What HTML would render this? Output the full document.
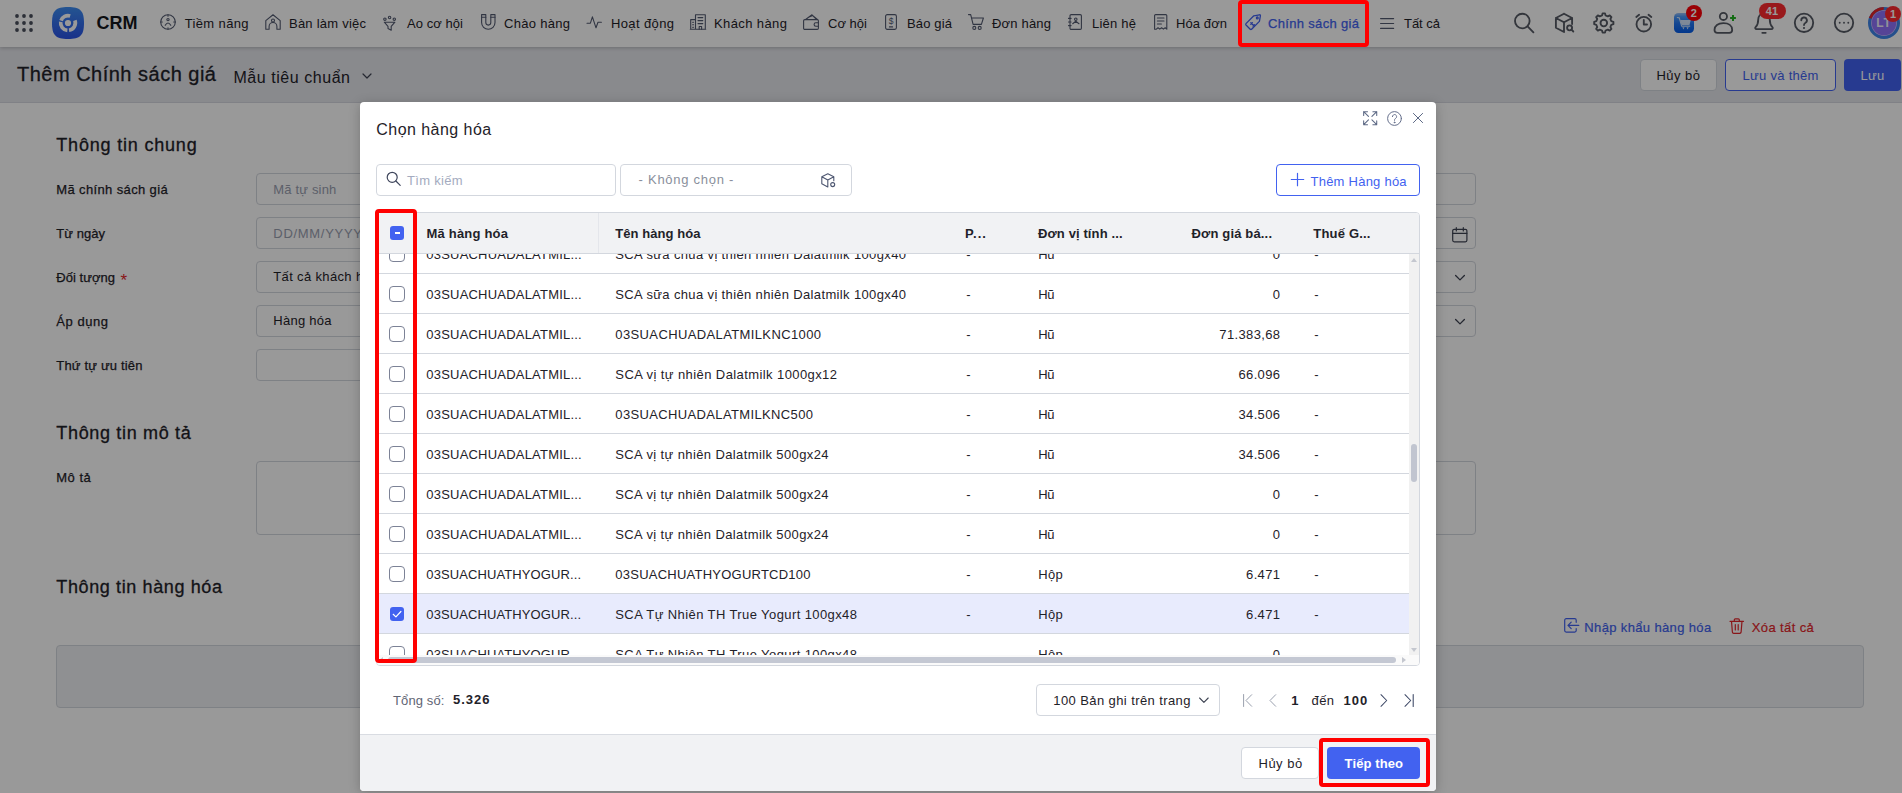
<!DOCTYPE html>
<html lang="vi"><head><meta charset="utf-8"><title>Thêm Chính sách giá - CRM</title>
<style>*{box-sizing:border-box;margin:0;padding:0}
html,body{width:1902px;height:793px;overflow:hidden;background:#fff}
body{font-family:"Liberation Sans",sans-serif;font-size:13px;color:#1f2229;position:relative}
.abs{position:absolute}
.t{position:absolute;white-space:pre;line-height:1}
svg{position:absolute;overflow:visible}
#nav{position:absolute;left:0;top:0;width:1902px;height:47px;background:#fff;box-shadow:0 1px 4px rgba(0,0,0,.22);z-index:2}
#sub{z-index:1;position:absolute;left:0;top:47px;width:1902px;height:56px;background:#e5e6ec;border-bottom:1px solid #d6d8df}
#content{position:absolute;left:0;top:102px;width:1902px;height:691px;background:#fff;z-index:0}
#overlay{position:absolute;left:0;top:0;width:1902px;height:793px;background:rgba(0,0,0,.4);z-index:5}
#modal{position:absolute;left:360px;top:102px;width:1076px;height:689px;background:#fff;border-radius:4px;z-index:6;overflow:hidden;box-shadow:0 2px 12px rgba(0,0,0,.22)}
.red{position:absolute;border:4px solid #ff0000;border-radius:4px;z-index:9}
.inp{position:absolute;border:1px solid #d3d7de;border-radius:4px;background:#fff}
.btn{position:absolute;border-radius:4px;height:32px;border:1px solid transparent}
.cb{position:absolute;left:29px;width:16px;height:16px;border:1px solid #7c8296;border-radius:4px;background:#fff}
.row{position:absolute;left:0;width:1033px;height:40px;border-top:1px solid #d3d7de}
</style></head>
<body>
<div id="nav">
<svg style="left:15px;top:14px" width="18" height="18" fill="#4a4f5c"><circle cx="2" cy="2" r="1.9"/><circle cx="2" cy="9" r="1.9"/><circle cx="2" cy="16" r="1.9"/><circle cx="9" cy="2" r="1.9"/><circle cx="9" cy="9" r="1.9"/><circle cx="9" cy="16" r="1.9"/><circle cx="16" cy="2" r="1.9"/><circle cx="16" cy="9" r="1.9"/><circle cx="16" cy="16" r="1.9"/></svg>
<svg style="left:52px;top:7px" width="32" height="32" viewBox="0 0 32 32"><defs><linearGradient id="lg" x1="0" y1="0" x2="0" y2="1"><stop offset="0" stop-color="#3d8df2"/><stop offset="1" stop-color="#2a52e6"/></linearGradient></defs><path d="M16 0C28.300 0 32 3.700 32 16S28.300 32 16 32 0 28.300 0 16 3.700 0 16 0z" fill="url(#lg)"/><g fill="none" stroke="#fff" stroke-width="3.700"><path d="M9.05 13.61A7.35 7.35 0 0 1 18.15 8.97"/><path d="M22.91 13.49A7.35 7.35 0 0 1 17.02 23.28"/><path d="M15.36 23.32A7.35 7.35 0 0 1 8.74 14.85"/></g><circle cx="16" cy="16" r="3.100" fill="#fff"/></svg>
<span class="t" style="font-size:18px;font-weight:700;color:#15171c;letter-spacing:0.0px;left:96.50px;top:13.66px;">CRM</span>
<svg style="left:160.1px;top:14.2px" width="16" height="16" viewBox="0 0 16 16" fill="none" stroke="#535a70" stroke-width="1.1" stroke-linecap="round" stroke-linejoin="round"><circle cx="8" cy="8" r="7.3"/><path d="M8 .7v1.6M8 13.7v1.6M.7 8h1.6M13.7 8h1.6"/><circle cx="8" cy="5.6" r="1.15"/><path d="M5.2 11.3Q8 6.6 10.8 11.3"/></svg>
<span class="t" style="font-size:13px;color:#1f2229;letter-spacing:0.37px;left:184.70px;top:16.60px;">Tiềm năng</span>
<svg style="left:265px;top:14px" width="16" height="16" viewBox="0 0 16 16" fill="none" stroke="#535a70" stroke-width="1.1" stroke-linecap="round" stroke-linejoin="round"><path d="M.8 15.200V6.600L8 .8l7.200 5.800v8.600h-3.300v-2.800a3.900 3.900 0 0 0-7.800 0v2.800z"/><circle cx="8" cy="6.500" r="1.500"/></svg>
<span class="t" style="font-size:13px;color:#1f2229;letter-spacing:0.234px;left:289.00px;top:16.60px;">Bàn làm việc</span>
<svg style="left:383.3px;top:15.5px" width="16" height="16" viewBox="0 0 16 16" fill="none" stroke="#535a70" stroke-width="1.1" stroke-linecap="round" stroke-linejoin="round"><circle cx="1.9" cy="3.2" r="1.200"/><circle cx="6.600" cy="1.500" r="1.200"/><circle cx="11.300" cy="3.200" r="1.200"/><path d="M1.300 6.200h10.600l-3.700 4.200v3.800l-3.200-1.600v-2.200z"/></svg>
<span class="t" style="font-size:13px;color:#1f2229;letter-spacing:0.062px;left:407.00px;top:16.60px;">Ao cơ hội</span>
<svg style="left:480.8px;top:14px" width="16" height="16" viewBox="0 0 16 16" fill="none" stroke="#535a70" stroke-width="1.1" stroke-linecap="round" stroke-linejoin="round"><path d="M.6 .6h4.2v8a2.5 2.5 0 0 0 5 0v-8H14v8a6.7 6.7 0 0 1-13.4 0z"/><path d="M.6 3.2h4.2M9.8 3.2H14"/></svg>
<span class="t" style="font-size:13px;color:#1f2229;letter-spacing:0.297px;left:504.00px;top:16.60px;">Chào hàng</span>
<svg style="left:587.3px;top:16px" width="16" height="16" viewBox="0 0 16 16" fill="none" stroke="#535a70" stroke-width="1.1" stroke-linecap="round" stroke-linejoin="round"><path d="M0 7.2h3.4l2-6.4 3.6 11 2-5.6h3.4"/></svg>
<span class="t" style="font-size:13px;color:#1f2229;letter-spacing:0.375px;left:611.00px;top:16.60px;">Hoạt động</span>
<svg style="left:689.7px;top:14px" width="16" height="16" viewBox="0 0 16 16" fill="none" stroke="#535a70" stroke-width="1.1" stroke-linecap="round" stroke-linejoin="round"><path d="M5.5 15.3V.7h9.8v14.6M.7 15.3V5.6h4.8M.3 15.3h15.4"/><path d="M8 3.6h4.8M8 6.6h4.8M8 9.6h4.8M2.6 8.3h1M2.6 10.8h1M2.6 13.2h1"/><path d="M9.2 15.3v-2.8h2.4v2.8"/></svg>
<span class="t" style="font-size:13px;color:#1f2229;letter-spacing:0.399px;left:714.00px;top:16.60px;">Khách hàng</span>
<svg style="left:802.5px;top:14px" width="16" height="16" viewBox="0 0 16 16" fill="none" stroke="#535a70" stroke-width="1.1" stroke-linecap="round" stroke-linejoin="round"><rect x=".6" y="5.6" width="14.8" height="9.8" rx="1.2"/><path d="M2.6 5.5L9 .8l4.4 4.6M6.2 2.9l3.6-1.3 4.6 3.9"/><path d="M15.4 8.8h-2.6a1.7 1.7 0 0 0 0 3.4h2.6"/></svg>
<span class="t" style="font-size:13px;color:#1f2229;letter-spacing:0.025px;left:828.00px;top:16.60px;">Cơ hội</span>
<svg style="left:884.6px;top:14px" width="12" height="16" viewBox="0 0 12 16" fill="none" stroke="#535a70" stroke-width="1.1" stroke-linecap="round" stroke-linejoin="round"><rect x=".6" y=".6" width="10.8" height="14.8" rx="1.6"/><path d="M4.4 12.9h3.2"/><text x="6" y="10.3" font-size="8.5" font-family="Liberation Sans, sans-serif" text-anchor="middle" fill="#535a70" stroke="none">$</text></svg>
<span class="t" style="font-size:13px;color:#1f2229;letter-spacing:0.151px;left:907.00px;top:16.60px;">Báo giá</span>
<svg style="left:967.6px;top:14px" width="16" height="16" viewBox="0 0 16 16" fill="none" stroke="#535a70" stroke-width="1.1" stroke-linecap="round" stroke-linejoin="round"><path d="M.5 .6h2.2l2.4 9.8h8.3l2-6.4H3.6"/><circle cx="6.3" cy="13.900" r="1.500"/><circle cx="11.700" cy="13.900" r="1.500"/></svg>
<span class="t" style="font-size:13px;color:#1f2229;letter-spacing:0.188px;left:992.00px;top:16.60px;">Đơn hàng</span>
<svg style="left:1068px;top:14px" width="16" height="16" viewBox="0 0 16 16" fill="none" stroke="#535a70" stroke-width="1.1" stroke-linecap="round" stroke-linejoin="round"><rect x="2" y=".6" width="11.4" height="14.8" rx="1.2"/><path d="M.5 4.4h2.6M.5 8h2.6M.5 11.6h2.6"/><circle cx="7.8" cy="5.3" r="1.25"/><path d="M4.7 9.7l3.1-2.4 3.2 2.4"/></svg>
<span class="t" style="font-size:13px;color:#1f2229;letter-spacing:0.224px;left:1092.00px;top:16.60px;">Liên hệ</span>
<svg style="left:1153.5px;top:14px" width="14" height="16" viewBox="0 0 14 16" fill="none" stroke="#535a70" stroke-width="1.1" stroke-linecap="round" stroke-linejoin="round"><path d="M.6 15.200V1.600a1 1 0 0 1 1-1h10.200a1 1 0 0 1 1 1v13.600l-1.600-1.500-1.800 1.500-1.800-1.500-1.800 1.500-1.800-1.500-1.600 1.500z"/><path d="M3.400 4h6.600M3.400 7h6.600M3.400 10h4"/></svg>
<span class="t" style="font-size:13px;color:#1f2229;letter-spacing:0.091px;left:1176.00px;top:16.60px;">Hóa đơn</span>
<svg style="left:1244.5px;top:13.8px" width="16" height="16" viewBox="0 0 16 16" fill="none" stroke="#4262f0" stroke-width="1.3" stroke-linecap="round" stroke-linejoin="round"><path d="M1 9.6L8.8 1.8l5.6-1q1.2-.2 1 1l-1 5.6-7.8 7.8q-.7.6-1.4 0L1 11q-.6-.7 0-1.400z"/><circle cx="12.3" cy="3.9" r=".9"/><path d="M5.8 8.6l1.6 1.6M7.4 8.6l-1.6 1.6M8 10.600l1.400 1.400M9.400 10.600l-1.400 1.400"/></svg>
<span class="t" style="font-size:13px;color:#4262f0;letter-spacing:0.328px;left:1268.00px;top:16.60px;-webkit-text-stroke:.25px #4262f0;">Chính sách giá</span>
<svg style="left:1379.7px;top:17.8px" width="14" height="11" viewBox="0 0 14 11" fill="none" stroke="#535a70" stroke-width="1.2" stroke-linecap="round" stroke-linejoin="round"><path d="M.6 .6h13M.6 5.5h13M.6 10.400h13"/></svg>
<span class="t" style="font-size:13px;color:#1f2229;letter-spacing:-0.025px;left:1404.00px;top:16.60px;">Tất cả</span>
<svg style="left:1512px;top:11px" width="24" height="24" viewBox="0 0 24 24" fill="none" stroke="#565a64" stroke-width="1.85" stroke-linecap="round" stroke-linejoin="round"><circle cx="10.300" cy="10" r="7.300"/><path d="M15.600 15.400l5.800 5.900"/></svg>
<svg style="left:1553px;top:11px" width="24" height="24" viewBox="0 0 24 24" fill="none" stroke="#565a64" stroke-width="1.85" stroke-linecap="round" stroke-linejoin="round"><path d="M11 2.800l8.100 4.200v6M11 2.800L2.900 7v9.800L11 21v-9.700L2.900 7M11 11.300L19.100 7"/><circle cx="16.600" cy="16.800" r="2.500"/><path d="M18.500 18.700l1.800 1.800"/></svg>
<svg style="left:1592px;top:11px" width="24" height="24" viewBox="0 0 24 24" fill="none" stroke="#565a64" stroke-width="1.85" stroke-linecap="round" stroke-linejoin="round"><path d="M10.00 4.51 L10.58 2.38 L13.02 2.38 L13.60 4.51 L15.82 5.43 L17.75 4.34 L19.46 6.05 L18.37 7.98 L19.29 10.20 L21.42 10.78 L21.42 13.22 L19.29 13.80 L18.37 16.02 L19.46 17.95 L17.75 19.66 L15.82 18.57 L13.60 19.49 L13.02 21.62 L10.58 21.62 L10.00 19.49 L7.78 18.57 L5.85 19.66 L4.14 17.95 L5.23 16.02 L4.31 13.80 L2.18 13.22 L2.18 10.78 L4.31 10.20 L5.23 7.98 L4.14 6.05 L5.85 4.34 L7.78 5.43Z" stroke-linejoin="round"/><circle cx="11.800" cy="12" r="3.300"/></svg>
<svg style="left:1632px;top:11px" width="24" height="24" viewBox="0 0 24 24" fill="none" stroke="#565a64" stroke-width="1.85" stroke-linecap="round" stroke-linejoin="round"><circle cx="11.800" cy="13.200" r="7.300"/><path d="M11.800 9v4.500h3.200M4.300 6l2.800-2.200M16.500 3.800L19.300 6"/></svg>
<div class="abs" style="left:1674px;top:13px;width:20px;height:20px;border-radius:4.500px;background:linear-gradient(180deg,#9cc0f2 0,#4b98fa 18%,#1f74f2 55%,#055ce8 100%)"></div>
<svg style="left:1674px;top:13.4px;opacity:.8" width="20" height="20" viewBox="0 0 20 20" fill="none" stroke="#fff" stroke-width="1.1" stroke-linecap="round" stroke-linejoin="round"><path d="M3.300 4.500l2 .4 2.300 8.200h8.200" stroke="#fff" stroke-width="1.100" fill="none"/><path d="M6.100 7.100h10.700l-1.300 5H7.500z" fill="#fff" stroke="none"/><path d="M8.300 14.300h2.200l-1.100 2.100zM12.500 14.300h2.200l-1.100 2.100z" fill="#fff" stroke="none"/></svg>
<div class="abs" style="left:1686px;top:5px;width:16px;height:16px;border-radius:8px;background:#ff0008"></div>
<span class="t" style="font-size:11px;font-weight:700;color:#fff;letter-spacing:0px;left:1690.80px;top:7.79px;">2</span>
<svg style="left:1711px;top:11px" width="24" height="24" viewBox="0 0 24 24" fill="none" stroke="#565a64" stroke-width="1.8" stroke-linecap="round" stroke-linejoin="round"><circle cx="12.400" cy="5.400" r="3.600"/><path d="M3.500 19c0-4.500 3.500-6.800 8.900-6.800s8.800 2.300 8.800 6.800c0 1.900-1.400 2.800-3 2.800H6.500c-1.600 0-3-.9-3-2.800z"/></svg>
<svg style="left:1729px;top:14px;stroke-linecap:butt" width="8" height="8" viewBox="0 0 8 8" fill="none" stroke="#22b522" stroke-width="2" stroke-linecap="round" stroke-linejoin="round"><path d="M4 1.100v5.800M1.100 4h5.800"/></svg>
<svg style="left:1752px;top:11px" width="24" height="24" viewBox="0 0 24 24" fill="none" stroke="#565a64" stroke-width="1.85" stroke-linecap="round" stroke-linejoin="round"><path d="M12 2.500c-3.600 0-5.800 2.800-5.800 6.300 0 4.200-1.400 6.200-2.600 7.300-.8.800-.3 2 .9 2h15c1.200 0 1.700-1.200.9-2-1.200-1.100-2.600-3.100-2.600-7.300 0-3.500-2.200-6.300-5.800-6.300z"/><path d="M10.300 21.800h3.400"/></svg>
<div class="abs" style="left:1759px;top:3px;width:27px;height:16px;border-radius:8px;background:#ff2b30"></div>
<span class="t" style="font-size:11px;font-weight:700;color:#fff;letter-spacing:0px;left:1765.80px;top:5.69px;">41</span>
<svg style="left:1792px;top:11px" width="24" height="24" viewBox="0 0 24 24" fill="none" stroke="#565a64" stroke-width="1.85" stroke-linecap="round" stroke-linejoin="round"><circle cx="12" cy="11.800" r="9.200"/><path d="M9.300 9.300a2.800 2.800 0 1 1 4.200 2.400c-1 .6-1.500 1.200-1.500 2.400"/><circle cx="12" cy="17" r="1.050" fill="#565a64" stroke="none"/></svg>
<svg style="left:1832px;top:11px" width="24" height="24" viewBox="0 0 24 24" fill="none" stroke="#565a64" stroke-width="1.85" stroke-linecap="round" stroke-linejoin="round"><circle cx="12" cy="11.800" r="9.200"/><g stroke="none" fill="#565a64"><circle cx="7.700" cy="11.800" r=".95"/><circle cx="12" cy="11.800" r=".95"/><circle cx="16.300" cy="11.800" r=".95"/></g></svg>
<div class="abs" style="left:1868px;top:7px;width:32px;height:32px;border-radius:16px;background:#8f72fa;border:3px solid #3f86ea;box-shadow:inset 0 0 0 .8px rgba(255,255,255,.55)"></div>
<svg style="left:1868px;top:7px;stroke-linecap:butt" width="32" height="32" viewBox="0 0 32 32" fill="none" stroke="#e5252b" stroke-width="2.8" stroke-linecap="round" stroke-linejoin="round"><path d="M2.20 11.25A14.6 14.6 0 0 1 15.75 1.40"/></svg>
<span class="t" style="font-size:12px;font-weight:700;color:rgba(255,255,255,.92);letter-spacing:0.8px;left:1876.30px;top:17.24px;">LT</span>
<div class="abs" style="left:1885.200px;top:6.300px;width:15.500px;height:15.500px;border-radius:8px;background:#ff2b30"></div>
<span class="t" style="font-size:11px;font-weight:700;color:#fff;letter-spacing:0px;left:1890.00px;top:8.69px;">1</span>
</div>
<div id="sub">
<span class="t" style="font-size:20px;color:#1f2229;letter-spacing:0.494px;left:17.00px;top:17.07px;-webkit-text-stroke:.3px #1f2229;">Thêm Chính sách giá</span>
<span class="t" style="font-size:16px;color:#1f2229;letter-spacing:0.546px;left:233.50px;top:23.06px;">Mẫu tiêu chuẩn</span>
<svg style="left:362px;top:25px" width="10" height="8" viewBox="0 0 10 8" fill="none" stroke="#3f4453" stroke-width="1.2" stroke-linecap="round" stroke-linejoin="round"><path d="M1 2l4 4 4-4"/></svg>
<div class="btn" style="left:1639.500px;top:12px;width:77px;background:#fff;border-color:#d3d7de"></div>
<span class="t" style="font-size:13px;color:#1f2229;letter-spacing:0.459px;left:1656.50px;top:21.80px;">Hủy bỏ</span>
<div class="btn" style="left:1725px;top:12px;width:111px;background:#fff;border-color:#4262f0"></div>
<span class="t" style="font-size:13px;color:#4262f0;letter-spacing:0.287px;left:1742.50px;top:21.80px;">Lưu và thêm</span>
<div class="btn" style="left:1844px;top:12px;width:57px;background:#4262f0"></div>
<span class="t" style="font-size:13px;color:#fff;letter-spacing:0.264px;left:1860.50px;top:21.80px;">Lưu</span>
</div>
<div id="content">
<span class="t" style="font-size:18px;color:#1f2229;letter-spacing:0.808px;left:56.30px;top:34.06px;-webkit-text-stroke:.3px #1f2229;">Thông tin chung</span>
<span class="t" style="font-size:13px;color:#1f2229;letter-spacing:0.368px;left:56.30px;top:80.80px;-webkit-text-stroke:.25px #1f2229;">Mã chính sách giá</span>
<div class="inp" style="left:256px;top:71px;width:1220px;height:32px"></div>
<span class="t" style="font-size:13px;color:#1f2229;letter-spacing:0.041px;left:56.30px;top:124.80px;-webkit-text-stroke:.25px #1f2229;">Từ ngày</span>
<div class="inp" style="left:256px;top:115px;width:1220px;height:32px"></div>
<span class="t" style="font-size:13px;color:#1f2229;letter-spacing:0.035px;left:56.30px;top:168.80px;-webkit-text-stroke:.25px #1f2229;">Đối tượng</span>
<div class="inp" style="left:256px;top:159px;width:1220px;height:32px"></div>
<span class="t" style="font-size:13px;color:#1f2229;letter-spacing:0.544px;left:56.30px;top:212.80px;-webkit-text-stroke:.25px #1f2229;">Áp dụng</span>
<div class="inp" style="left:256px;top:203px;width:1220px;height:32px"></div>
<span class="t" style="font-size:13px;color:#1f2229;letter-spacing:0.175px;left:56.30px;top:256.80px;-webkit-text-stroke:.25px #1f2229;">Thứ tự ưu tiên</span>
<div class="inp" style="left:256px;top:247px;width:600px;height:32px"></div>
<span class="t" style="font-size:17px;color:#e5252b;letter-spacing:0px;left:120.50px;top:170.11px;">*</span>
<span class="t" style="font-size:13px;color:#9aa0b0;letter-spacing:0.172px;left:273.30px;top:80.80px;">Mã tự sinh</span>
<span class="t" style="font-size:13px;color:#9aa0b0;letter-spacing:0.706px;left:273.30px;top:124.80px;">DD/MM/YYYY</span>
<span class="t" style="font-size:13px;color:#1f2229;letter-spacing:0.35px;left:273.30px;top:168.30px;">Tất cả khách hàng</span>
<span class="t" style="font-size:13px;color:#1f2229;letter-spacing:0.258px;left:273.30px;top:212.30px;">Hàng hóa</span>
<svg style="left:1452px;top:125px" width="16" height="16" viewBox="0 0 16 16" fill="none" stroke="#3f4453" stroke-width="1.2" stroke-linecap="round" stroke-linejoin="round"><rect x=".7" y="2.300" width="14.200" height="12.500" rx="1.500"/><path d="M.7 6.300h14.200M4.300 .7v3.200M11.300 .7v3.200"/></svg>
<svg style="left:1454.5px;top:171.5px" width="10" height="8" viewBox="0 0 10 8" fill="none" stroke="#3f4453" stroke-width="1.3" stroke-linecap="round" stroke-linejoin="round"><path d="M.6 1.500l4.400 4.400 4.400-4.400"/></svg>
<svg style="left:1454.5px;top:215.5px" width="10" height="8" viewBox="0 0 10 8" fill="none" stroke="#3f4453" stroke-width="1.3" stroke-linecap="round" stroke-linejoin="round"><path d="M.6 1.500l4.400 4.400 4.400-4.400"/></svg>
<span class="t" style="font-size:18px;color:#1f2229;letter-spacing:0.673px;left:56.30px;top:322.06px;-webkit-text-stroke:.3px #1f2229;">Thông tin mô tả</span>
<span class="t" style="font-size:13px;color:#1f2229;letter-spacing:0.471px;left:56.30px;top:368.80px;-webkit-text-stroke:.25px #1f2229;">Mô tả</span>
<div class="inp" style="left:256px;top:359px;width:1220px;height:74px"></div>
<span class="t" style="font-size:18px;color:#1f2229;letter-spacing:0.621px;left:56.30px;top:476.06px;-webkit-text-stroke:.3px #1f2229;">Thông tin hàng hóa</span>
<div class="inp" style="left:56px;top:543px;width:1808px;height:63px;background:#eff0f3"></div>
<svg style="left:1564px;top:516.2px" width="16" height="16" viewBox="0 0 16 16" fill="none" stroke="#4262f0" stroke-width="1.2" stroke-linecap="round" stroke-linejoin="round"><path d="M12.200 4.300V2.200a1.500 1.500 0 0 0-1.500-1.500H2.200A1.500 1.500 0 0 0 .7 2.200v10.400a1.500 1.500 0 0 0 1.500 1.500h8.500a1.500 1.500 0 0 0 1.500-1.500v-2"/><path d="M14.800 7.400H4M7.200 4.200L4 7.400l3.200 3.200"/></svg>
<span class="t" style="font-size:13px;color:#4262f0;letter-spacing:0.364px;left:1584.30px;top:519.00px;-webkit-text-stroke:.2px #4262f0;">Nhập khẩu hàng hóa</span>
<svg style="left:1728.5px;top:516px" width="16" height="16" viewBox="0 0 16 16" fill="none" stroke="#e5252b" stroke-width="1.2" stroke-linecap="round" stroke-linejoin="round"><path d="M1 3.300h13.500M5.300 3.300V1.800a1 1 0 0 1 1-1h3a1 1 0 0 1 1 1v1.500M2.500 3.300l.9 10.900a1.300 1.300 0 0 0 1.300 1.100h6.100a1.300 1.300 0 0 0 1.300-1.100L13 3.300M6.300 6.500v5.500M9.200 6.500v5.500"/></svg>
<span class="t" style="font-size:13px;color:#e5252b;letter-spacing:0.384px;left:1751.80px;top:519.00px;-webkit-text-stroke:.2px #e5252b;">Xóa tất cả</span>
</div>
<div id="overlay"></div>
<div id="modal">
<span class="t" style="font-size:16px;color:#1f2229;letter-spacing:0.455px;left:16.30px;top:19.76px;">Chọn hàng hóa</span>
<svg style="left:1002.7px;top:8.799999999999997px" width="14.4" height="14.4" viewBox="0 0 15 15" fill="none" stroke="#5d6985" stroke-width="1.1" stroke-linecap="round" stroke-linejoin="round"><path d="M.7 4.700V.7h4M.7 .7l5 5M10.300 .7h4v4M14.300 .7l-5 5M.7 10.300v4h4M.7 14.300l5-5M14.300 10.300v4h-4M14.300 14.300l-5-5"/></svg>
<svg style="left:1027px;top:8.5px" width="15" height="15" viewBox="0 0 15 15" fill="none" stroke="#66708c" stroke-width="1" stroke-linecap="round" stroke-linejoin="round"><circle cx="7.500" cy="7.500" r="6.900"/><path d="M5.400 5.600a2.100 2.100 0 1 1 3.200 1.800c-.8.500-1.100.9-1.100 1.900"/><circle cx="7.500" cy="11.400" r=".45" fill="#5d6985"/></svg>
<svg style="left:1053px;top:11px" width="10" height="10" viewBox="0 0 10 10" fill="none" stroke="#5d6985" stroke-width="1" stroke-linecap="round" stroke-linejoin="round"><path d="M.4 .4l9.200 9.200M9.600 .4L.4 9.600"/></svg>
<div class="inp" style="left:16px;top:62px;width:240px;height:32px"></div>
<svg style="left:26.30000000000001px;top:69.19999999999999px" width="16" height="16" viewBox="0 0 16 16" fill="none" stroke="#3f465c" stroke-width="1.2" stroke-linecap="round" stroke-linejoin="round"><circle cx="6.200" cy="6.300" r="5"/><path d="M9.900 10l4.300 4.300"/></svg>
<span class="t" style="font-size:13px;color:#a4abc0;letter-spacing:0.292px;left:47.00px;top:71.60px;">Tìm kiếm</span>
<div class="inp" style="left:260px;top:62px;width:232px;height:32px"></div>
<span class="t" style="font-size:13px;color:#8a8f9c;letter-spacing:0.732px;left:278.60px;top:71.20px;">- Không chọn -</span>
<svg style="left:461px;top:70.5px" width="16" height="16" viewBox="0 0 16 16" fill="none" stroke="#4d5670" stroke-width="1.1" stroke-linecap="round" stroke-linejoin="round"><path d="M6.800 .8l6 3v4M6.800 .8L.8 3.800v7l6 3.200V7L.8 3.800M6.800 7l6-3.200"/><circle cx="11.700" cy="11.600" r="2"/></svg>
<div class="btn" style="left:916px;top:62px;width:144px;border-color:#4262f0;background:#fff"></div>
<svg style="left:931px;top:71px" width="13" height="13" viewBox="0 0 13 13" fill="none" stroke="#4262f0" stroke-width="1.2" stroke-linecap="round" stroke-linejoin="round"><path d="M6.500 .3v12.400M.3 6.500h12.400"/></svg>
<span class="t" style="font-size:13px;color:#4262f0;letter-spacing:0.239px;left:950.50px;top:72.60px;">Thêm Hàng hóa</span>
<div class="abs" style="left:16px;top:110px;width:1044px;height:454px;border:1px solid #d3d7de;border-radius:4px;overflow:hidden;background:#fff">
<div class="abs" style="left:0;top:41px;width:1032px;height:401px;overflow:hidden">
<div class="row" style="top:-21px;">
<div class="cb" style="left:12px;top:12px"></div>
<span class="t" style="font-size:13px;color:#1f2229;letter-spacing:0.207px;left:49.30px;top:14.20px;">03SUACHUADALATMIL...</span>
<span class="t" style="font-size:13px;color:#1f2229;letter-spacing:0.365px;left:238.30px;top:14.20px;">SCA sữa chua vị thiên nhiên Dalatmilk 100gx40</span>
<span class="t" style="font-size:13px;color:#1f2229;letter-spacing:0px;left:589.30px;top:14.20px;">-</span>
<span class="t" style="font-size:13px;color:#1f2229;letter-spacing:-0.325px;left:661.30px;top:14.20px;">Hũ</span>
<span class="t" style="font-size:13px;color:#1f2229;letter-spacing:0.35px;left:895.77px;top:14.20px;">0</span>
<span class="t" style="font-size:13px;color:#1f2229;letter-spacing:0px;left:937.30px;top:14.20px;">-</span>
</div>
<div class="row" style="top:19px;">
<div class="cb" style="left:12px;top:12px"></div>
<span class="t" style="font-size:13px;color:#1f2229;letter-spacing:0.207px;left:49.30px;top:14.20px;">03SUACHUADALATMIL...</span>
<span class="t" style="font-size:13px;color:#1f2229;letter-spacing:0.365px;left:238.30px;top:14.20px;">SCA sữa chua vị thiên nhiên Dalatmilk 100gx40</span>
<span class="t" style="font-size:13px;color:#1f2229;letter-spacing:0px;left:589.30px;top:14.20px;">-</span>
<span class="t" style="font-size:13px;color:#1f2229;letter-spacing:-0.325px;left:661.30px;top:14.20px;">Hũ</span>
<span class="t" style="font-size:13px;color:#1f2229;letter-spacing:0.35px;left:895.77px;top:14.20px;">0</span>
<span class="t" style="font-size:13px;color:#1f2229;letter-spacing:0px;left:937.30px;top:14.20px;">-</span>
</div>
<div class="row" style="top:59px;">
<div class="cb" style="left:12px;top:12px"></div>
<span class="t" style="font-size:13px;color:#1f2229;letter-spacing:0.207px;left:49.30px;top:14.20px;">03SUACHUADALATMIL...</span>
<span class="t" style="font-size:13px;color:#1f2229;letter-spacing:0.378px;left:238.30px;top:14.20px;">03SUACHUADALATMILKNC1000</span>
<span class="t" style="font-size:13px;color:#1f2229;letter-spacing:0px;left:589.30px;top:14.20px;">-</span>
<span class="t" style="font-size:13px;color:#1f2229;letter-spacing:-0.325px;left:661.30px;top:14.20px;">Hũ</span>
<span class="t" style="font-size:13px;color:#1f2229;letter-spacing:0.35px;left:842.36px;top:14.20px;">71.383,68</span>
<span class="t" style="font-size:13px;color:#1f2229;letter-spacing:0px;left:937.30px;top:14.20px;">-</span>
</div>
<div class="row" style="top:99px;">
<div class="cb" style="left:12px;top:12px"></div>
<span class="t" style="font-size:13px;color:#1f2229;letter-spacing:0.207px;left:49.30px;top:14.20px;">03SUACHUADALATMIL...</span>
<span class="t" style="font-size:13px;color:#1f2229;letter-spacing:0.41px;left:238.30px;top:14.20px;">SCA vị tự nhiên Dalatmilk 1000gx12</span>
<span class="t" style="font-size:13px;color:#1f2229;letter-spacing:0px;left:589.30px;top:14.20px;">-</span>
<span class="t" style="font-size:13px;color:#1f2229;letter-spacing:-0.325px;left:661.30px;top:14.20px;">Hũ</span>
<span class="t" style="font-size:13px;color:#1f2229;letter-spacing:0.35px;left:861.48px;top:14.20px;">66.096</span>
<span class="t" style="font-size:13px;color:#1f2229;letter-spacing:0px;left:937.30px;top:14.20px;">-</span>
</div>
<div class="row" style="top:139px;">
<div class="cb" style="left:12px;top:12px"></div>
<span class="t" style="font-size:13px;color:#1f2229;letter-spacing:0.207px;left:49.30px;top:14.20px;">03SUACHUADALATMIL...</span>
<span class="t" style="font-size:13px;color:#1f2229;letter-spacing:0.36px;left:238.30px;top:14.20px;">03SUACHUADALATMILKNC500</span>
<span class="t" style="font-size:13px;color:#1f2229;letter-spacing:0px;left:589.30px;top:14.20px;">-</span>
<span class="t" style="font-size:13px;color:#1f2229;letter-spacing:-0.325px;left:661.30px;top:14.20px;">Hũ</span>
<span class="t" style="font-size:13px;color:#1f2229;letter-spacing:0.35px;left:861.48px;top:14.20px;">34.506</span>
<span class="t" style="font-size:13px;color:#1f2229;letter-spacing:0px;left:937.30px;top:14.20px;">-</span>
</div>
<div class="row" style="top:179px;">
<div class="cb" style="left:12px;top:12px"></div>
<span class="t" style="font-size:13px;color:#1f2229;letter-spacing:0.207px;left:49.30px;top:14.20px;">03SUACHUADALATMIL...</span>
<span class="t" style="font-size:13px;color:#1f2229;letter-spacing:0.384px;left:238.30px;top:14.20px;">SCA vị tự nhiên Dalatmilk 500gx24</span>
<span class="t" style="font-size:13px;color:#1f2229;letter-spacing:0px;left:589.30px;top:14.20px;">-</span>
<span class="t" style="font-size:13px;color:#1f2229;letter-spacing:-0.325px;left:661.30px;top:14.20px;">Hũ</span>
<span class="t" style="font-size:13px;color:#1f2229;letter-spacing:0.35px;left:861.48px;top:14.20px;">34.506</span>
<span class="t" style="font-size:13px;color:#1f2229;letter-spacing:0px;left:937.30px;top:14.20px;">-</span>
</div>
<div class="row" style="top:219px;">
<div class="cb" style="left:12px;top:12px"></div>
<span class="t" style="font-size:13px;color:#1f2229;letter-spacing:0.207px;left:49.30px;top:14.20px;">03SUACHUADALATMIL...</span>
<span class="t" style="font-size:13px;color:#1f2229;letter-spacing:0.384px;left:238.30px;top:14.20px;">SCA vị tự nhiên Dalatmilk 500gx24</span>
<span class="t" style="font-size:13px;color:#1f2229;letter-spacing:0px;left:589.30px;top:14.20px;">-</span>
<span class="t" style="font-size:13px;color:#1f2229;letter-spacing:-0.325px;left:661.30px;top:14.20px;">Hũ</span>
<span class="t" style="font-size:13px;color:#1f2229;letter-spacing:0.35px;left:895.77px;top:14.20px;">0</span>
<span class="t" style="font-size:13px;color:#1f2229;letter-spacing:0px;left:937.30px;top:14.20px;">-</span>
</div>
<div class="row" style="top:259px;">
<div class="cb" style="left:12px;top:12px"></div>
<span class="t" style="font-size:13px;color:#1f2229;letter-spacing:0.207px;left:49.30px;top:14.20px;">03SUACHUADALATMIL...</span>
<span class="t" style="font-size:13px;color:#1f2229;letter-spacing:0.384px;left:238.30px;top:14.20px;">SCA vị tự nhiên Dalatmilk 500gx24</span>
<span class="t" style="font-size:13px;color:#1f2229;letter-spacing:0px;left:589.30px;top:14.20px;">-</span>
<span class="t" style="font-size:13px;color:#1f2229;letter-spacing:-0.325px;left:661.30px;top:14.20px;">Hũ</span>
<span class="t" style="font-size:13px;color:#1f2229;letter-spacing:0.35px;left:895.77px;top:14.20px;">0</span>
<span class="t" style="font-size:13px;color:#1f2229;letter-spacing:0px;left:937.30px;top:14.20px;">-</span>
</div>
<div class="row" style="top:299px;">
<div class="cb" style="left:12px;top:12px"></div>
<span class="t" style="font-size:13px;color:#1f2229;letter-spacing:0.1px;left:49.30px;top:14.20px;">03SUACHUATHYOGUR...</span>
<span class="t" style="font-size:13px;color:#1f2229;letter-spacing:0.236px;left:238.30px;top:14.20px;">03SUACHUATHYOGURTCD100</span>
<span class="t" style="font-size:13px;color:#1f2229;letter-spacing:0px;left:589.30px;top:14.20px;">-</span>
<span class="t" style="font-size:13px;color:#1f2229;letter-spacing:0.32px;left:661.30px;top:14.20px;">Hộp</span>
<span class="t" style="font-size:13px;color:#1f2229;letter-spacing:0.35px;left:869.05px;top:14.20px;">6.471</span>
<span class="t" style="font-size:13px;color:#1f2229;letter-spacing:0px;left:937.30px;top:14.20px;">-</span>
</div>
<div class="row" style="top:339px;background:#e8ebfd;">
<div class="abs" style="left:13px;top:13px;width:14px;height:14px;border-radius:3px;background:#4262f0"></div>
<svg style="left:13px;top:13px" width="14" height="14" viewBox="0 0 14 14" fill="none" stroke="#fff" stroke-width="1.2" stroke-linecap="round" stroke-linejoin="round"><path d="M3.200 7.300l2.700 2.600 5-5.400"/></svg>
<span class="t" style="font-size:13px;color:#1f2229;letter-spacing:0.1px;left:49.30px;top:14.20px;">03SUACHUATHYOGUR...</span>
<span class="t" style="font-size:13px;color:#1f2229;letter-spacing:0.405px;left:238.30px;top:14.20px;">SCA Tự Nhiên TH True Yogurt 100gx48</span>
<span class="t" style="font-size:13px;color:#1f2229;letter-spacing:0px;left:589.30px;top:14.20px;">-</span>
<span class="t" style="font-size:13px;color:#1f2229;letter-spacing:0.32px;left:661.30px;top:14.20px;">Hộp</span>
<span class="t" style="font-size:13px;color:#1f2229;letter-spacing:0.35px;left:869.05px;top:14.20px;">6.471</span>
<span class="t" style="font-size:13px;color:#1f2229;letter-spacing:0px;left:937.30px;top:14.20px;">-</span>
</div>
<div class="row" style="top:379px;">
<div class="cb" style="left:12px;top:12px"></div>
<span class="t" style="font-size:13px;color:#1f2229;letter-spacing:0.1px;left:49.30px;top:14.20px;">03SUACHUATHYOGUR...</span>
<span class="t" style="font-size:13px;color:#1f2229;letter-spacing:0.405px;left:238.30px;top:14.20px;">SCA Tự Nhiên TH True Yogurt 100gx48</span>
<span class="t" style="font-size:13px;color:#1f2229;letter-spacing:0px;left:589.30px;top:14.20px;">-</span>
<span class="t" style="font-size:13px;color:#1f2229;letter-spacing:0.32px;left:661.30px;top:14.20px;">Hộp</span>
<span class="t" style="font-size:13px;color:#1f2229;letter-spacing:0.35px;left:895.77px;top:14.20px;">0</span>
<span class="t" style="font-size:13px;color:#1f2229;letter-spacing:0px;left:937.30px;top:14.20px;">-</span>
</div>
</div>
<div class="abs" style="left:0;top:0;width:1042px;height:41px;background:#f1f2f4;border-bottom:1px solid #d3d7de"></div>
<div class="abs" style="left:221px;top:0;width:1px;height:40px;background:#e4e6eb"></div>
<div class="abs" style="left:13px;top:13px;width:14px;height:14px;border-radius:3px;background:#4262f0"></div>
<div class="abs" style="left:17.5px;top:19.400000000000006px;width:5px;height:1.200px;background:#fff"></div>
<span class="t" style="font-size:13px;font-weight:700;color:#1f2229;letter-spacing:0.205px;left:49.50px;top:14.00px;">Mã hàng hóa</span>
<span class="t" style="font-size:13px;font-weight:700;color:#1f2229;letter-spacing:0.064px;left:238.20px;top:14.00px;">Tên hàng hóa</span>
<span class="t" style="font-size:13px;font-weight:700;color:#1f2229;letter-spacing:1.052px;left:588.00px;top:14.00px;">P...</span>
<span class="t" style="font-size:13px;font-weight:700;color:#1f2229;letter-spacing:0.113px;left:661.00px;top:14.00px;">Đơn vị tính ...</span>
<span class="t" style="font-size:13px;font-weight:700;color:#1f2229;letter-spacing:0.159px;left:814.50px;top:14.00px;">Đơn giá bá...</span>
<span class="t" style="font-size:13px;font-weight:700;color:#1f2229;letter-spacing:0.197px;left:936.30px;top:14.00px;">Thuế G...</span>
<div class="abs" style="left:1032px;top:41px;width:10px;height:402px;background:#f1f1f1"></div>
<div class="abs" style="left:1034px;top:231px;width:6px;height:38px;border-radius:3px;background:#c1c5d0"></div>
<svg style="left:1034px;top:44.5px" width="6" height="4" viewBox="0 0 6 4" fill="#c4c7cf" stroke="none" stroke-width="1.2" stroke-linecap="round" stroke-linejoin="round"><path d="M0 4l3-4 3 4z"/></svg>
<svg style="left:1034px;top:435px" width="6" height="4" viewBox="0 0 6 4" fill="#c4c7cf" stroke="none" stroke-width="1.2" stroke-linecap="round" stroke-linejoin="round"><path d="M0 0l3 4 3-4z"/></svg>
<div class="abs" style="left:0;top:442px;width:1042px;height:10px;background:#fafafa"></div>
<div class="abs" style="left:11px;top:444px;width:1008px;height:6px;border-radius:3px;background:#c4c8d3"></div>
<svg style="left:1025px;top:444px" width="4" height="6" viewBox="0 0 4 6" fill="#c4c7cf" stroke="none" stroke-width="1.2" stroke-linecap="round" stroke-linejoin="round"><path d="M0 0l4 3-4 3z"/></svg>
<svg style="left:2px;top:444px" width="4" height="6" viewBox="0 0 4 6" fill="#c4c7cf" stroke="none" stroke-width="1.2" stroke-linecap="round" stroke-linejoin="round"><path d="M4 0L0 3l4 3z"/></svg>
</div>
<span class="t" style="font-size:13px;color:#5f6575;letter-spacing:0.115px;left:33.00px;top:592.20px;">Tổng số:</span>
<span class="t" style="font-size:13px;font-weight:700;color:#1f2229;letter-spacing:0.988px;left:93.00px;top:591.00px;">5.326</span>
<div class="inp" style="left:676px;top:582px;width:184px;height:32px"></div>
<span class="t" style="font-size:13px;color:#1f2229;letter-spacing:0.407px;left:693.30px;top:591.80px;">100 Bản ghi trên trang</span>
<svg style="left:838.5px;top:594.5px" width="10" height="7" viewBox="0 0 10 7" fill="none" stroke="#3f4453" stroke-width="1.1" stroke-linecap="round" stroke-linejoin="round"><path d="M.6 1l4.300 4.300L9.200 1"/></svg>
<svg style="left:882.5px;top:592px" width="10" height="13" viewBox="0 0 10 13" fill="none" stroke="#9aa0ae" stroke-width="1" stroke-linecap="round" stroke-linejoin="round"><path d="M.6 .5v12M8.700 .7L3 6.500l5.700 5.800"/></svg>
<svg style="left:908.8px;top:592px" width="8" height="13" viewBox="0 0 8 13" fill="none" stroke="#9aa0ae" stroke-width="1" stroke-linecap="round" stroke-linejoin="round"><path d="M6.700 .7L1 6.500l5.700 5.800"/></svg>
<span class="t" style="font-size:13px;font-weight:700;color:#1f2229;letter-spacing:0px;left:931.30px;top:591.80px;">1</span>
<span class="t" style="font-size:13px;color:#1f2229;letter-spacing:0.398px;left:951.50px;top:591.80px;">đến</span>
<span class="t" style="font-size:13px;font-weight:700;color:#1f2229;letter-spacing:1.048px;left:983.50px;top:591.80px;">100</span>
<svg style="left:1020px;top:592px" width="8" height="13" viewBox="0 0 8 13" fill="none" stroke="#3b4664" stroke-width="1.05" stroke-linecap="round" stroke-linejoin="round"><path d="M1 .7l5.700 5.800L1 12.300"/></svg>
<svg style="left:1043.7px;top:592px" width="10" height="13" viewBox="0 0 10 13" fill="none" stroke="#3b4664" stroke-width="1.05" stroke-linecap="round" stroke-linejoin="round"><path d="M9.200 .5v12M1 .7l5.700 5.800L1 12.300"/></svg>
<div class="abs" style="left:0;top:632px;width:1076px;height:57px;background:#f1f2f4;border-top:1px solid #d9dce2"></div>
<div class="btn" style="left:881px;top:645px;width:78px;background:#fff;border-color:#d3d7de"></div>
<span class="t" style="font-size:13px;color:#1f2229;letter-spacing:0.499px;left:898.50px;top:654.60px;">Hủy bỏ</span>
<div class="btn" style="left:967px;top:645px;width:93px;background:#4262f0"></div>
<span class="t" style="font-size:13px;font-weight:700;color:#fff;letter-spacing:0.107px;left:984.60px;top:654.60px;">Tiếp theo</span>
</div>
<div class="red" style="left:1238px;top:-.3px;width:131px;height:47px"></div>
<div class="red" style="left:375px;top:209px;width:42px;height:454px"></div>
<div class="red" style="left:1319px;top:738px;width:111px;height:49px"></div>
</body></html>
